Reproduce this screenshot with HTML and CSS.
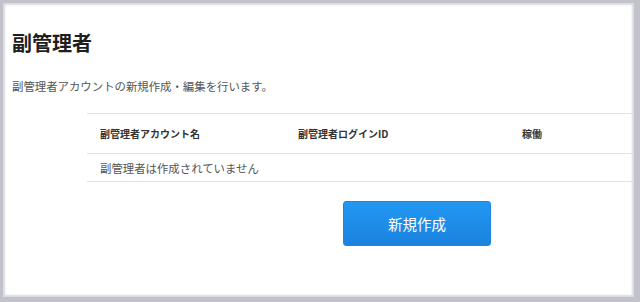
FILE: index.html
```html
<!DOCTYPE html>
<html lang="ja">
<head>
    <meta charset="UTF-8">
    <title>副管理者</title>
    <link rel="stylesheet" href="styles.css">
</head>
<body>
    <div class="frame">
        <h1 class="title">副管理者</h1>
        <p class="lead">副管理者アカウントの新規作成・編集を行います。</p>

        <table class="sub-table">
            <thead>
                <tr>
                    <th class="col-name">副管理者アカウント名</th>
                    <th class="col-login">副管理者ログインID</th>
                    <th>稼働</th>
                </tr>
            </thead>
            <tbody>
                <tr>
                    <td colspan="3">副管理者は作成されていません</td>
                </tr>
            </tbody>
        </table>

        <button class="create-button">新規作成</button>
    </div>
</body>
</html>
```

FILE: styles.css
```css
* {
    margin: 0;
    padding: 0;
    box-sizing: border-box;
}

body {
    font-family: "Noto Sans CJK JP", "Noto Sans", sans-serif;
    background: #fff;
}

.frame {
    width: 640px;
    height: 302px;
    padding: 28px 0 0 9px;
    border-style: solid;
    border-color: #c2c2ca;
    border-width: 3px 6px 5px 3px;
    box-shadow: inset 2px 2px 2px #dadae0, inset -2px -2px 2px #dadae0;
    background: #fff;
}

.title {
    font-size: 20px;
    line-height: 24px;
    font-weight: bold;
    color: #1e1e1e;
}

.lead {
    margin-top: 23px;
    font-size: 11.4px;
    line-height: 16px;
    color: #555;
}

.sub-table {
    margin: 19px 0 0 75px;
    width: calc(100% - 75px);
    border-collapse: collapse;
    table-layout: fixed;
}

.sub-table th,
.sub-table td {
    text-align: left;
    padding: 0 13px;
    border-top: 1px solid #e2e2e2;
}

.sub-table th {
    height: 40px;
    font-size: 10px;
    font-weight: bold;
    color: #333;
}

.sub-table td {
    height: 28px;
    font-size: 11.4px;
    color: #555;
    border-bottom: 1px solid #e2e2e2;
}

.col-name {
    width: 198px;
}

.col-login {
    width: 224px;
}

.create-button {
    display: block;
    margin: 19px 0 0 331px;
    width: 148px;
    height: 45px;
    font-family: inherit;
    font-size: 14.5px;
    color: #fff;
    background: linear-gradient(#2298f2, #1b82de);
    border: 1px solid #1f86df;
    border-radius: 3px;
    cursor: pointer;
}
```
